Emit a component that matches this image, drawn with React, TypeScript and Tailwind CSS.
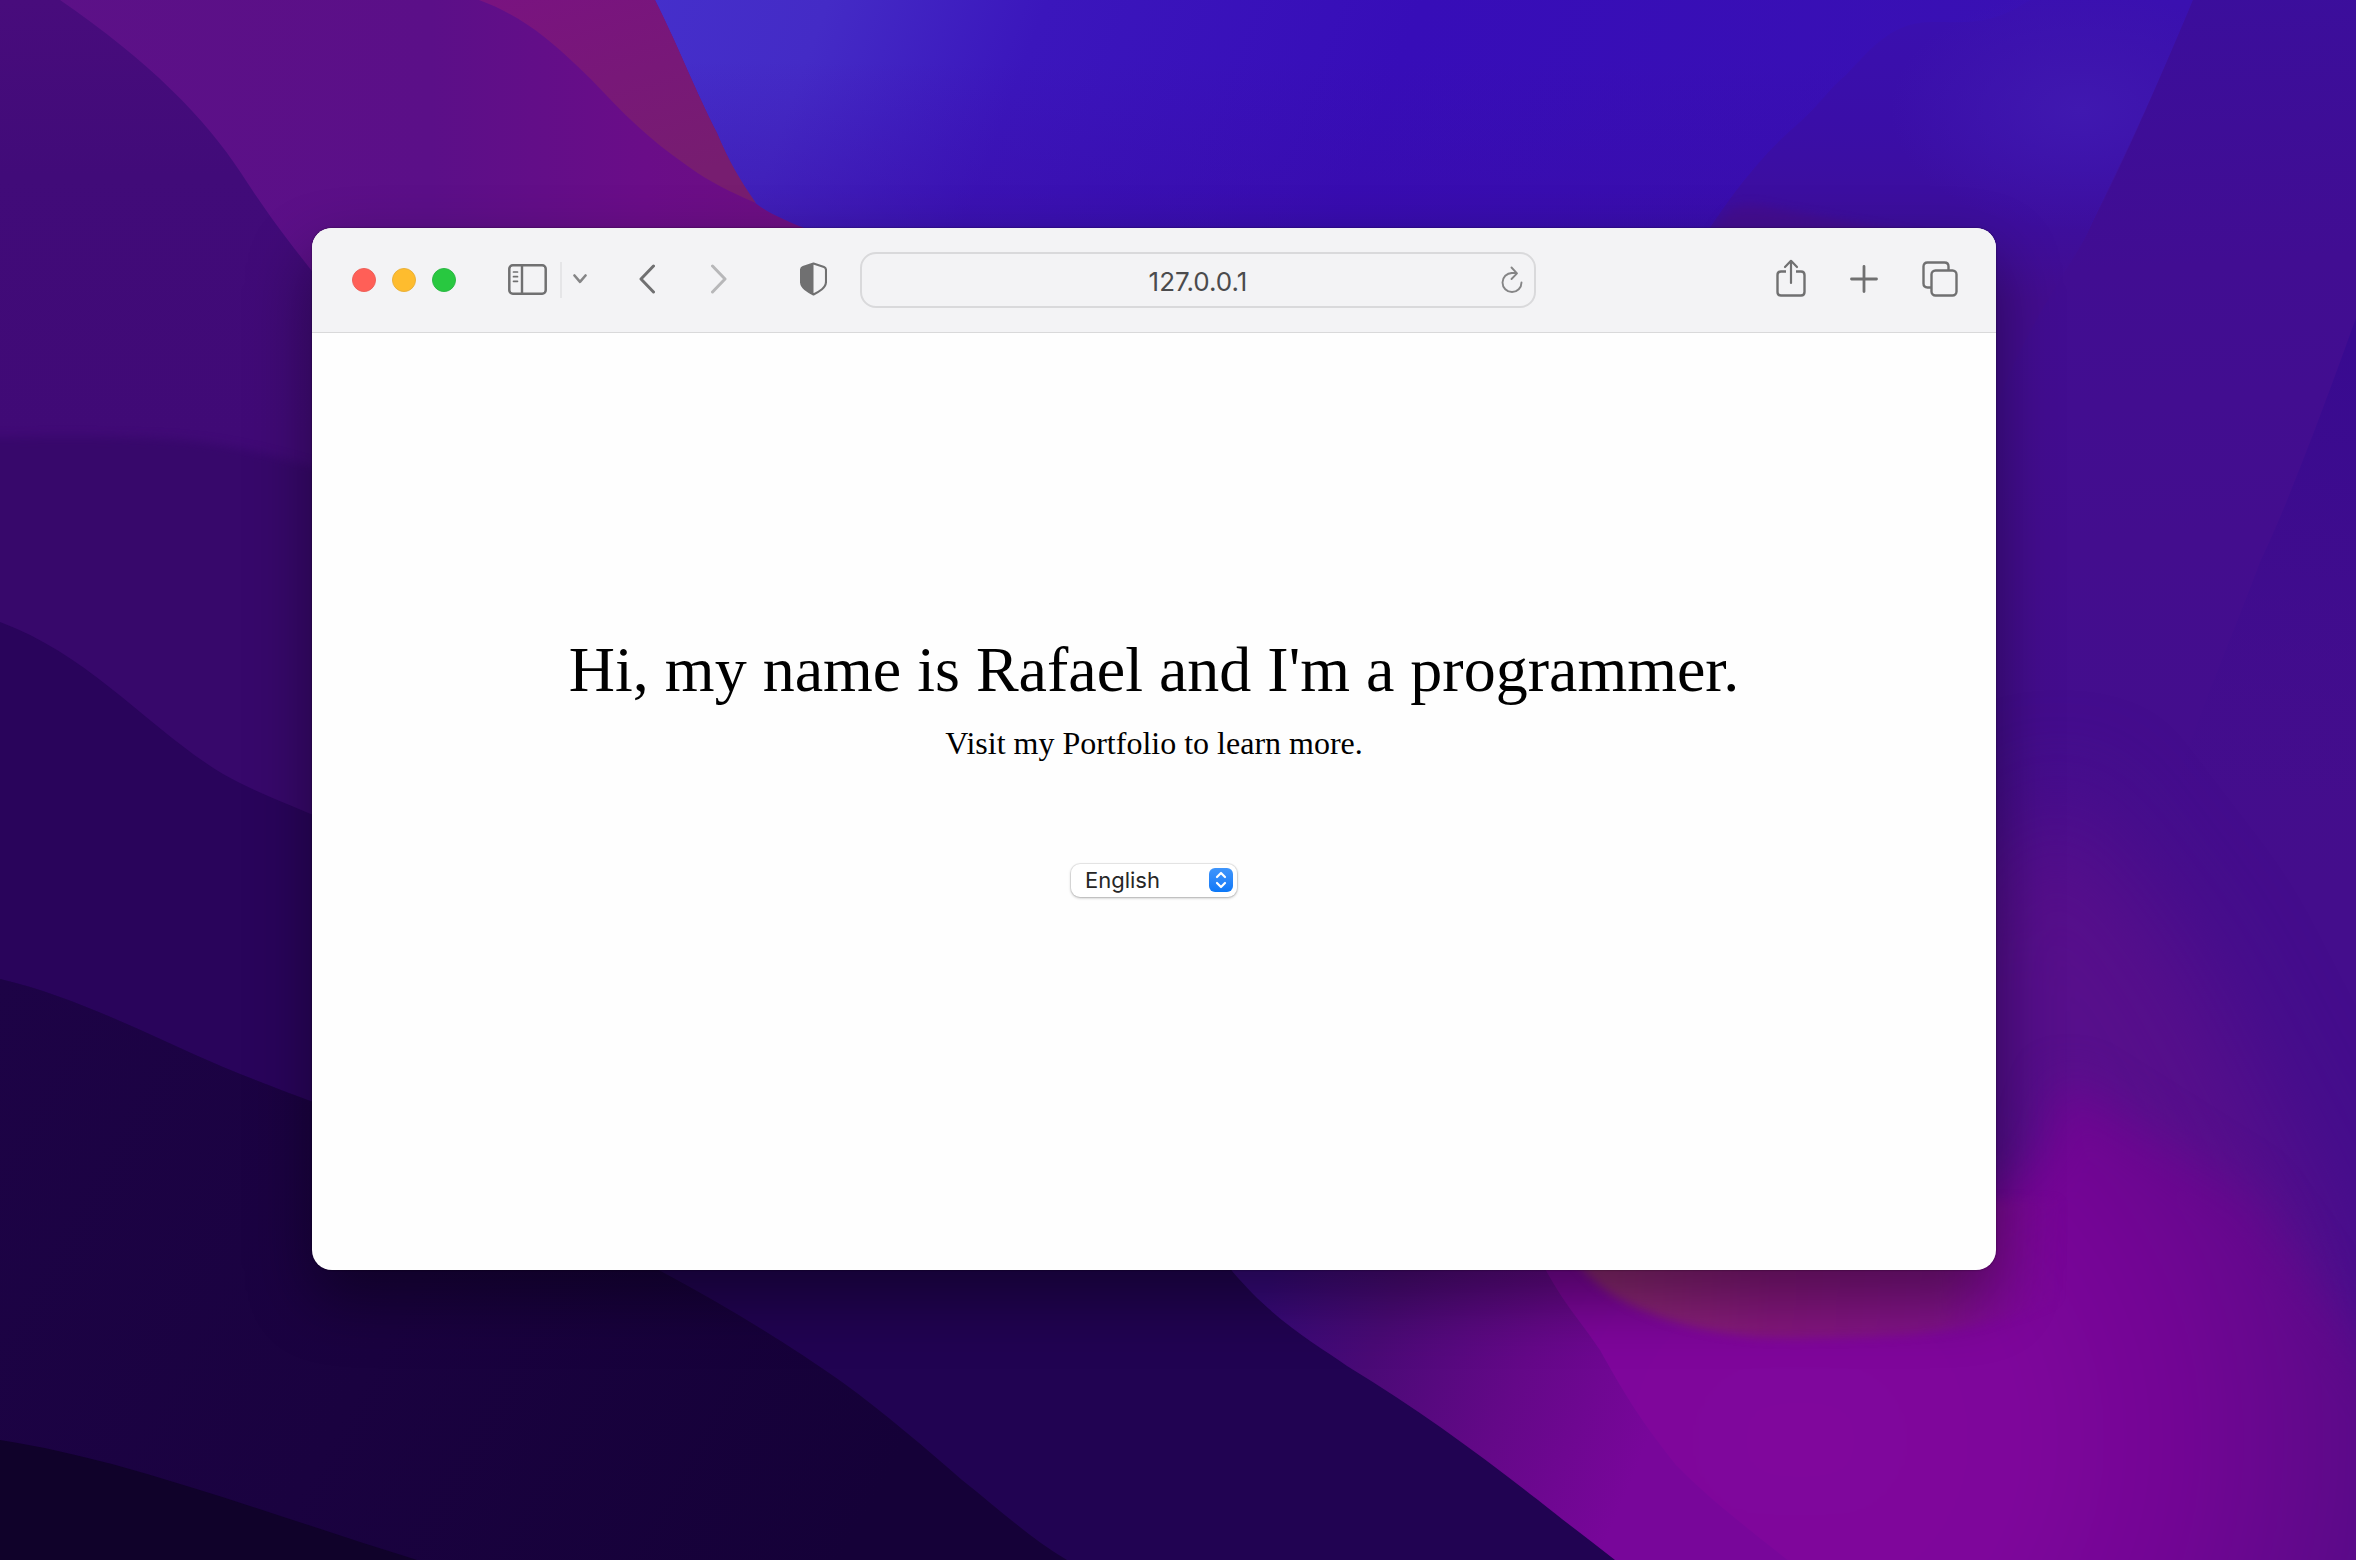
import type { ReactNode } from "react";

function Wallpaper() {
  return (
    <svg
      aria-hidden="true"
      className="absolute inset-0 h-full w-full"
      viewBox="0 0 2356 1560"
      preserveAspectRatio="xMidYMid slice"
    >
      <defs>
        <linearGradient id="blue" x1="0" y1="0" x2="1" y2="0.1">
          <stop offset="0" stopColor="#452fcb" />
          <stop offset="0.12" stopColor="#442bc6" />
          <stop offset="0.26" stopColor="#3b16bc" />
          <stop offset="0.5" stopColor="#370db8" />
          <stop offset="1" stopColor="#3a11b2" />
        </linearGradient>
        <linearGradient id="blueShade" gradientUnits="userSpaceOnUse" x1="0" y1="60" x2="0" y2="320">
          <stop offset="0" stopColor="#3a0ba4" stopOpacity="0" />
          <stop offset="1" stopColor="#3a0ba0" stopOpacity="0.7" />
        </linearGradient>
        <linearGradient id="cove" gradientUnits="userSpaceOnUse" x1="0" y1="0" x2="0" y2="300">
          <stop offset="0" stopColor="#3a10b0" />
          <stop offset="0.4" stopColor="#3a0ea8" />
          <stop offset="0.75" stopColor="#3d0e9c" />
          <stop offset="1" stopColor="#430d8f" />
        </linearGradient>
        <linearGradient id="violet" x1="0" y1="0" x2="1" y2="0">
          <stop offset="0" stopColor="#5c1187" />
          <stop offset="0.5" stopColor="#5b0f88" />
          <stop offset="0.75" stopColor="#6a0d88" />
          <stop offset="1" stopColor="#6e1080" />
        </linearGradient>
        <linearGradient id="rose" x1="0" y1="0" x2="0.4" y2="1">
          <stop offset="0" stopColor="#791380" />
          <stop offset="1" stopColor="#771d70" />
        </linearGradient>
        <linearGradient id="indigo" gradientUnits="userSpaceOnUse" x1="0" y1="0" x2="0" y2="440">
          <stop offset="0" stopColor="#480c7c" />
          <stop offset="0.4" stopColor="#410b79" />
          <stop offset="1" stopColor="#400a76" />
        </linearGradient>
        <linearGradient id="east" gradientUnits="userSpaceOnUse" x1="2100" y1="0" x2="2150" y2="900">
          <stop offset="0" stopColor="#3b0e9c" />
          <stop offset="0.3" stopColor="#410d92" />
          <stop offset="0.6" stopColor="#430d8e" />
          <stop offset="1" stopColor="#440d8c" />
        </linearGradient>
        <linearGradient id="eastEdge" gradientUnits="userSpaceOnUse" x1="2330" y1="340" x2="2290" y2="800">
          <stop offset="0" stopColor="#380a90" />
          <stop offset="0.35" stopColor="#3b0b8e" stopOpacity="0.8" />
          <stop offset="1" stopColor="#400c8c" stopOpacity="0" />
        </linearGradient>
        <linearGradient id="slope" x1="0" y1="0" x2="1" y2="0.3">
          <stop offset="0" stopColor="#1d0346" />
          <stop offset="0.5" stopColor="#1a0240" />
          <stop offset="1" stopColor="#150138" />
        </linearGradient>
        <linearGradient id="valley" gradientUnits="userSpaceOnUse" x1="1260" y1="1300" x2="1640" y2="1460">
          <stop offset="0" stopColor="#36097a" />
          <stop offset="0.3" stopColor="#4a0a76" />
          <stop offset="0.65" stopColor="#640888" />
          <stop offset="1" stopColor="#78069a" />
        </linearGradient>
        <linearGradient id="band" gradientUnits="userSpaceOnUse" x1="1583" y1="1271" x2="2060" y2="1300">
          <stop offset="0" stopColor="#8c2a70" />
          <stop offset="0.4" stopColor="#84167c" />
          <stop offset="0.75" stopColor="#801288" />
          <stop offset="1" stopColor="#7a0894" stopOpacity="0" />
        </linearGradient>
        <radialGradient id="magenta" gradientUnits="userSpaceOnUse" cx="1800" cy="1440" r="640">
          <stop offset="0" stopColor="#80079c" />
          <stop offset="0.35" stopColor="#7e069b" />
          <stop offset="0.6" stopColor="#720594" />
          <stop offset="0.85" stopColor="#5e098a" />
          <stop offset="1" stopColor="#500c86" />
        </radialGradient>
        <radialGradient id="glow">
          <stop offset="0" stopColor="#4018b0" />
          <stop offset="1" stopColor="#4018b0" stopOpacity="0" />
        </radialGradient>
        <filter id="wide" x="-50%" y="-50%" width="200%" height="200%" colorInterpolationFilters="sRGB">
          <feGaussianBlur stdDeviation="50" />
        </filter>
        <filter id="soft" x="-20%" y="-20%" width="140%" height="140%" colorInterpolationFilters="sRGB">
          <feGaussianBlur stdDeviation="22" />
        </filter>
        <filter id="edge" x="-5%" y="-20%" width="110%" height="140%" colorInterpolationFilters="sRGB">
          <feGaussianBlur stdDeviation="5" />
        </filter>
      </defs>

      <rect width="2356" height="1560" fill="url(#east)" />
      <path d="M640 0H2193C2165 70 2140 120 2087 234L1990 420H640Z" fill="url(#blue)" />
      <path d="M640 0H2193C2165 70 2140 120 2087 234L1990 420H640Z" fill="url(#blueShade)" />
      <path
        d="M1690 260C1720 210 1755 160 1800 122C1822 102 1828 90 1846 75C1870 50 1890 23 1930 22C1970 22 1990 26 2030 0H2193C2165 70 2140 120 2087 234L1990 420H1690Z"
        fill="url(#cove)"
      />
      <ellipse cx="2080" cy="110" rx="190" ry="120" fill="url(#glow)" />
      <path d="M1710 240C1725 205 1740 200 1770 207L1920 235V260H1700Z" fill="#470d88" filter="url(#edge)" opacity="0.6" />
      <path
        d="M2193 0C2172 50 2130 150 2087 234C2060 285 2015 340 1985 440V1300H2356V0Z"
        fill="url(#east)"
      />
      <path d="M2356 318C2330 390 2290 500 2260 562C2235 630 2200 710 2170 800H2356Z" fill="url(#eastEdge)" />

      <path d="M2060 790L2190 960L2330 1230L2400 1600H1500V1250L1960 1200V900Z" fill="#570f8b" filter="url(#wide)" />
      <path d="M2064 1078L2250 1195L2400 1400V1700H1300V1200H1980L2035 1160Z" fill="url(#magenta)" filter="url(#soft)" />
      <path d="M1575 1200V1260C1600 1290 1620 1300 1646 1311C1680 1326 1740 1340 1806 1338C1870 1336 1960 1340 2060 1300V1200Z" fill="url(#band)" filter="url(#edge)" />
      <path
        d="M1180 1200H1538V1255C1560 1300 1580 1320 1600 1350C1622 1390 1640 1420 1676 1465C1710 1500 1750 1530 1800 1570H1180Z"
        fill="url(#valley)"
      />

      <path d="M0 0H655C680 50 695 90 717 133C728 160 740 180 752 200C765 212 785 220 804 228L860 260V500H0Z" fill="url(#violet)" />
      <path
        d="M479 0H655C680 50 695 90 717 133C728 160 740 180 756 203C730 192 710 182 689 167C665 150 650 138 631 120C605 95 595 82 574 63C550 40 520 15 479 0Z"
        fill="url(#rose)"
      />
      <path d="M0 0H60C150 62 205 118 241 173C270 218 295 250 335 300V500H0Z" fill="url(#indigo)" />
      <path d="M-40 438C80 436 150 436 200 442C250 448 290 460 360 480V900H-40Z" fill="#37086b" filter="url(#edge)" />
      <path d="M0 622C90 655 150 730 223 774C255 792 285 803 330 822V1150H0Z" fill="#29045b" />
      <path d="M0 979C80 998 150 1036 223 1067C255 1080 285 1092 330 1108L1190 1200L1232 1271C1275 1322 1315 1343 1347 1366C1420 1410 1480 1455 1538 1500C1565 1522 1590 1540 1615 1560H0Z" fill="#210352" />
      <path d="M0 979C80 998 150 1036 223 1067C255 1080 285 1092 330 1108L620 1250C700 1290 780 1338 842 1382C885 1413 925 1448 962 1480C1000 1510 1030 1538 1067 1560H0Z" fill="url(#slope)" />
      <path d="M0 1440C40 1446 80 1456 112 1464C220 1494 320 1530 417 1560H0Z" fill="#10022a" />
    </svg>
  );
}

function ToolButton({ label, children, className = "" }: { label: string; children: ReactNode; className?: string }) {
  return (
    <button type="button" aria-label={label} className={`mb-0.5 shrink-0 text-[#707071] ${className}`}>
      {children}
    </button>
  );
}

const stroke = {
  fill: "none",
  stroke: "currentColor",
  strokeLinecap: "round" as const,
  strokeLinejoin: "round" as const,
};

function Toolbar() {
  return (
    <header className="flex h-[105px] items-center border-b border-[#d9d9da] bg-[#f3f3f5] pr-[38px] pl-10">
      <div className="flex shrink-0 gap-4">
        <button type="button" aria-label="Close" className="size-6 rounded-full border border-[#ee6059] bg-[#ff5f57]" />
        <button type="button" aria-label="Minimize" className="size-6 rounded-full border border-[#eab13a] bg-[#febc2e]" />
        <button type="button" aria-label="Zoom" className="size-6 rounded-full border border-[#2cb845] bg-[#28c840]" />
      </div>

      <ToolButton label="Sidebar" className="ml-[52px]">
        <svg width="39" height="31" viewBox="0 0 39 31" {...stroke} className="block">
          <rect x="1.300" y="1.300" width="36.400" height="28.400" rx="3.5" strokeWidth="2.5" />
          <path d="M14 1.500V29.500" strokeWidth="2.4" />
          <path d="M5.500 8h4M5.500 12.700h4M5.500 17.300h4" strokeWidth="1.7" />
        </svg>
      </ToolButton>
      <div className="ml-[13px] h-9 w-0.5 shrink-0 bg-[#e5e5e7]" />
      <ToolButton label="Tab groups" className="ml-[11px] text-[#858586]">
        <svg width="14" height="10" viewBox="0 0 14 10" {...stroke} className="block">
          <path d="M1.500 1.500L7 7.800L12.500 1.500" strokeWidth="2.6" />
        </svg>
      </ToolButton>
      <ToolButton label="Back" className="ml-[52px]">
        <svg width="16" height="30" viewBox="0 0 16 30" {...stroke} className="block">
          <path d="M14.500 2L2 15L14.500 28" strokeWidth="3" />
        </svg>
      </ToolButton>
      <ToolButton label="Forward" className="ml-14 opacity-45">
        <svg width="16" height="30" viewBox="0 0 16 30" {...stroke} className="block">
          <path d="M1.500 2L14 15L1.500 28" strokeWidth="3" />
        </svg>
      </ToolButton>
      <ToolButton label="Privacy report" className="ml-[73px]">
        <svg width="27" height="34" viewBox="0 0 27 34" {...stroke} className="block">
          <path d="M13.500 1.500L24 5Q26 5.700 26 8V19.500Q26 24 22 27.200Q18.500 30 13.500 32.500Q8.500 30 5 27.200Q1 24 1 19.500V8Q1 5.700 3 5Z" strokeWidth="2.1" />
          <path d="M13.500 1.500L3 5Q1 5.700 1 8V19.500Q1 24 5 27.200Q8.500 30 13.500 32.500Z" fill="currentColor" stroke="none" />
        </svg>
      </ToolButton>

      <div className="relative ml-[33px] min-w-0 flex-1">
        <input
          aria-label="Address"
          defaultValue="127.0.0.1"
          className="block h-14 w-full rounded-2xl border-2 border-[#d9d9db] bg-transparent pt-0.5 text-center font-['Inter',sans-serif] text-[26px] text-[#4b4b4d] outline-none"
        />
        <button type="button" aria-label="Reload" className="absolute inset-y-0 right-3 text-[#858586]">
          <svg width="24" height="28" viewBox="0 0 24 28" {...stroke} className="block">
            <path d="M12 7A9.500 9.500 0 1 0 21.500 16.500" strokeWidth="1.9" />
            <path d="M11.500 1.500L17 7.300L11.500 13" strokeWidth="1.9" />
            <path d="M11.500 7H16" strokeWidth="1.9" />
          </svg>
        </button>
      </div>

      <ToolButton label="Share" className="ml-[240px]">
        <svg width="30" height="40" viewBox="0 0 30 40" {...stroke} className="block">
          <path d="M10 12.500H5Q1.500 12.500 1.500 16V33Q1.500 36.500 5 36.500H25Q28.500 36.500 28.500 33V16Q28.500 12.500 25 12.500H20" strokeWidth="2.4" strokeLinecap="butt" />
          <path d="M15 24V2M9 8L15 1.800L21 8" strokeWidth="2.2" />
        </svg>
      </ToolButton>
      <ToolButton label="New tab" className="ml-11">
        <svg width="28" height="28" viewBox="0 0 28 28" {...stroke} className="block">
          <path d="M14 1.500V26.500M1.500 14H26.500" strokeWidth="2.8" />
        </svg>
      </ToolButton>
      <ToolButton label="Tab overview" className="ml-11">
        <svg width="36" height="36" viewBox="0 0 36 36" {...stroke} className="block">
          <path d="M8.500 26.500H5.500Q1.500 26.500 1.500 22.500V5.500Q1.500 1.500 5.500 1.500H22.500Q26.500 1.500 26.500 5.500V8.500" strokeWidth="2.4" />
          <rect x="9.500" y="9.500" width="25" height="25" rx="4" strokeWidth="2.4" />
        </svg>
      </ToolButton>
    </header>
  );
}

function LanguagePicker() {
  return (
    <div className="relative mt-[102px]">
      <select
        aria-label="Language"
        defaultValue="English"
        className="block h-[33px] w-[166px] appearance-none rounded-[9px] bg-white pl-3.5 font-['Inter',sans-serif] text-[22px] leading-[33px] text-[#262626] shadow-[0_0_0_1px_rgba(0,0,0,0.07),0_1px_3px_rgba(0,0,0,0.28)] outline-none"
      >
        <option>English</option>
      </select>
      <span className="pointer-events-none absolute top-1 right-1 flex size-6 items-center justify-center rounded-md bg-linear-to-b from-[#3f95fb] to-[#0a78f8]">
        <svg width="12" height="18" viewBox="0 0 12 18" {...stroke} className="block text-white">
          <path d="M2 6L6 2L10 6M2 12L6 16L10 12" strokeWidth="2.2" />
        </svg>
      </span>
    </div>
  );
}

export default function App() {
  return (
    <div className="relative flex min-h-screen overflow-hidden bg-[#3b0c80] pt-[228px] pr-[360px] pb-[290px] pl-[312px]">
      <Wallpaper />
      <div className="relative flex min-w-0 flex-1 rounded-[20px] shadow-[0_0_2px_rgba(0,0,0,0.6),0_28px_64px_rgba(0,0,0,0.4)]">
        <div className="flex min-w-0 flex-1 flex-col overflow-hidden rounded-[20px] bg-[#fefefe]">
          <Toolbar />
          <main className="flex flex-1 flex-col items-center justify-center pb-[74px] text-center font-['Liberation_Serif',serif] text-black">
            <h1 className="text-[64px] leading-[74px]">Hi, my name is Rafael and I'm a programmer.</h1>
            <p className="mt-[18px] text-[32px] leading-[37px]">Visit my Portfolio to learn more.</p>
            <LanguagePicker />
          </main>
        </div>
      </div>
    </div>
  );
}
